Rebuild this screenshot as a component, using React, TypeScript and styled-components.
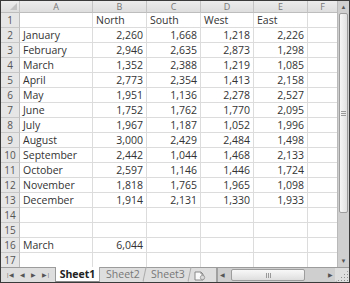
import React from "react";
import styled, {createGlobalStyle} from "styled-components";

const GlobalStyle = createGlobalStyle`
  html, body {
    margin: 0;
    padding: 0;
    background: #fff;
  }
  body {
    font-family: "Open Sans", "Liberation Sans", sans-serif;
  }
`;

const Frame = styled.div`
  width: 350px;
  height: 283px;
  box-sizing: border-box;
  border: 1px solid #3a3a3a;
  display: grid;
  grid-template-columns: 1fr 12px;
  grid-template-rows: 1fr 15px;
  overflow: hidden;
  background: #fff;
`;

const Sheet = styled.div`
  display: grid;
  grid-template-columns: 19px 73px 54px 54px 53px 54px 30px;
  grid-template-rows: 12px repeat(17, 15px);
  overflow: hidden;
`;

const Cell = styled.div<{ $align?: "left" | "right" }>`
  box-sizing: border-box;
  border-right: 1px solid #dcdcdc;
  border-bottom: 1px solid #dcdcdc;
  font-size: 10.5px;
  line-height: 14px;
  color: #333;
  padding: 0 3px;
  white-space: nowrap;
  overflow: hidden;
  text-align: ${p => p.$align === "right" ? "right" : "left"};
`;

const ColHead = styled.div`
  box-sizing: border-box;
  background: linear-gradient(#ececec, #dedede);
  border-right: 1px solid #c4c4c4;
  border-bottom: 1px solid #bdbdbd;
  font-size: 9px;
  line-height: 11px;
  color: #777;
  text-align: center;
`;

const RowHead = styled.div`
  box-sizing: border-box;
  background: #e6e6e6;
  border-right: 1px solid #bdbdbd;
  border-bottom: 1px solid #c8c8c8;
  font-size: 10px;
  line-height: 14px;
  color: #555;
  text-align: center;
`;

const Corner = styled(ColHead)`
  position: relative;
  &::after {
    content: "";
    position: absolute;
    right: 2px;
    bottom: 2px;
    border-style: solid;
    border-width: 0 0 7px 7px;
    border-color: transparent transparent #c2c2c2 transparent;
  }
`;

const VScroll = styled.div`
  background: #cfcfcf;
  border-left: 1px solid #b9b9b9;
  display: grid;
  grid-template-rows: 12px 1fr 12px;
  padding: 0 1px;
`;

const Arrow = styled.div`
  display: flex;
  align-items: center;
  justify-content: center;
  font-size: 6px;
  color: #555;
`;

const VTrack = styled.div`
  display: flex;
  flex-direction: column;
  padding-bottom: 42px;
`;

const VThumb = styled.div`
  flex: 1;
  background: linear-gradient(90deg, #f7f7f7, #e2e2e2);
  border: 1px solid #9d9d9d;
  border-radius: 2px;
  display: flex;
  align-items: center;
  justify-content: center;
`;

const Grip = styled.div<{ $dir: "v" | "h" }>`
  width: 5px;
  height: 5px;
  background: ${p => p.$dir === "v"
    ? "repeating-linear-gradient(#999 0 1px, transparent 1px 2px)"
    : "repeating-linear-gradient(90deg, #999 0 1px, transparent 1px 2px)"};
`;

const TabBar = styled.div`
  grid-column: 1 / 3;
  background: #dedede;
  border-top: 1px solid #9c9c9c;
  display: flex;
  align-items: stretch;
`;

const Nav = styled.div`
  width: 50px;
  display: flex;
  align-items: center;
  justify-content: space-around;
  padding: 0 2px;
  font-size: 6px;
  color: #555;
`;

const Tab = styled.div<{ $active?: boolean }>`
  box-sizing: border-box;
  width: 45px;
  margin-top: -1px;
  background: ${p => p.$active ? "#fff" : "transparent"};
  border-left: 1px solid ${p => p.$active ? "#999" : "transparent"};
  border-right: 1px solid #aaa;
  border-bottom: 1px solid ${p => p.$active ? "#888" : "transparent"};
  font-size: 10.5px;
  font-weight: ${p => p.$active ? 700 : 400};
  color: ${p => p.$active ? "#222" : "#777"};
  line-height: 14px;
  text-align: center;
  transform: ${p => p.$active ? "none" : "skewX(-12deg)"};
  span {
    display: inline-block;
    transform: ${p => p.$active ? "none" : "skewX(12deg)"};
  }
`;

const NewSheet = styled.div`
  width: 18px;
  display: flex;
  align-items: center;
  justify-content: center;
`;

const HScroll = styled.div`
  flex: 1;
  display: flex;
  align-items: center;
  margin-left: 8px;
  border-left: 2px solid #a0a0a0;
  background: #cfcfcf;
  padding: 0 2px;
  gap: 3px;
`;

const HThumb = styled.div`
  width: 72px;
  height: 10px;
  margin-left: 3px;
  background: linear-gradient(#f8f8f8, #dedede);
  border: 1px solid #9d9d9d;
  border-radius: 2px;
  display: flex;
  align-items: center;
  justify-content: center;
`;

const Spacer = styled.div`
  flex: 1;
`;

const ResizeGrip = styled.div`
  width: 12px;
  height: 12px;
  align-self: flex-end;
  border-left: 2px solid #bdbdbd;
  background: radial-gradient(circle, #8d8d8d 0.8px, transparent 1px) 0 0 / 3px 3px;
  clip-path: polygon(100% 0, 100% 100%, 0 100%);
`;

const columns = ["A", "B", "C", "D", "E", "F"];

const data: [string, string, string, string, string][] = [
    ["January", "2,260", "1,668", "1,218", "2,226"],
    ["February", "2,946", "2,635", "2,873", "1,298"],
    ["March", "1,352", "2,388", "1,219", "1,085"],
    ["April", "2,773", "2,354", "1,413", "2,158"],
    ["May", "1,951", "1,136", "2,278", "2,527"],
    ["June", "1,752", "1,762", "1,770", "2,095"],
    ["July", "1,967", "1,187", "1,052", "1,996"],
    ["August", "3,000", "2,429", "2,484", "1,498"],
    ["September", "2,442", "1,044", "1,468", "2,133"],
    ["October", "2,597", "1,146", "1,446", "1,724"],
    ["November", "1,818", "1,765", "1,965", "1,098"],
    ["December", "1,914", "2,131", "1,330", "1,933"],
];

const rows: string[][] = [
    ["", "North", "South", "West", "East", ""],
    ...data.map(r => [...r, ""]),
    ["", "", "", "", "", ""],
    ["", "", "", "", "", ""],
    ["March", "6,044", "", "", "", ""],
    ["", "", "", "", "", ""],
];

const NewSheetIcon = () => (
    <svg width="13" height="11" viewBox="0 0 13 11">
        <path d="M2 2h6l2 2v6H2z" fill="#fafafa" stroke="#888" strokeWidth="1"/>
        <path d="M8 2v2h2" fill="none" stroke="#888"/>
        <circle cx="9.5" cy="7.5" r="2.2" fill="#d9d9d9" stroke="#777" strokeWidth="0.6"/>
    </svg>
);

const App = () => {
    return (
        <>
            <GlobalStyle/>
            <Frame>
                <Sheet>
                    <Corner/>
                    {columns.map(c => <ColHead key={c}>{c}</ColHead>)}
                    {rows.map((row, i) => (
                        <React.Fragment key={i}>
                            <RowHead>{i + 1}</RowHead>
                            {row.map((v, j) => (
                                <Cell key={j} $align={i > 0 && j > 0 ? "right" : "left"}>{v}</Cell>
                            ))}
                        </React.Fragment>
                    ))}
                </Sheet>
                <VScroll>
                    <Arrow>▲</Arrow>
                    <VTrack>
                        <VThumb><Grip $dir="v"/></VThumb>
                    </VTrack>
                    <Arrow>▼</Arrow>
                </VScroll>
                <TabBar>
                    <Nav>
                        <span>|◀</span><span>◀</span><span>▶</span><span>▶|</span>
                    </Nav>
                    <Tab $active><span>Sheet1</span></Tab>
                    <Tab><span>Sheet2</span></Tab>
                    <Tab><span>Sheet3</span></Tab>
                    <NewSheet><NewSheetIcon/></NewSheet>
                    <HScroll>
                        <Arrow>◀</Arrow>
                        <HThumb><Grip $dir="h"/></HThumb>
                        <Spacer/>
                        <Arrow>▶</Arrow>
                    </HScroll>
                    <ResizeGrip/>
                </TabBar>
            </Frame>
        </>
    );
}

export default App;
